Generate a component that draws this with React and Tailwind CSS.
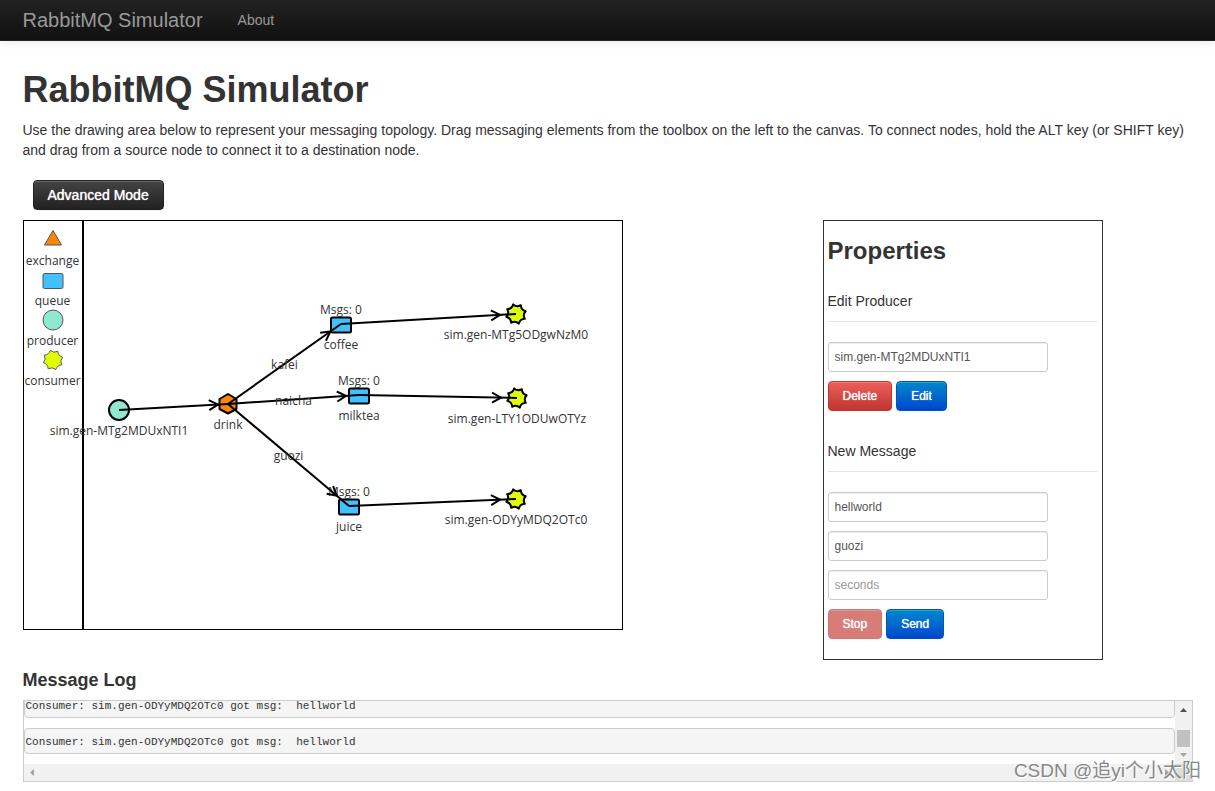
import { useState } from 'react'
import clsx from 'clsx'

// eight pointed teeth joined by inward curves
const point = (deg, r) => {
  const a = (deg * Math.PI) / 180
  return `${(r * Math.sin(a)).toFixed(2)} ${(-r * Math.cos(a)).toFixed(2)}`
}
const GEAR =
  `M${point(-16, 10)}` +
  Array.from({ length: 8 }, (_, i) => `Q${point(i * 45 + 6, 6.5)} ${point(i * 45 + 29, 10)}`).join('') +
  'Z'

function Shape({ type, stroke = 2, color = '#000' }) {
  const common = { stroke: color, strokeWidth: stroke, strokeLinejoin: 'round' }
  switch (type) {
    case 'exchange':
      return <polygon points="0,-9.500 8.500,5 -8.500,5" fill="#ff8408" {...common} />
    case 'hexagon':
      return <polygon points="0,-10 8.500,-5 8.500,5 0,9.500 -8.500,5 -8.500,-5" fill="#ff8408" {...common} />
    case 'queue':
      return <rect x="-10" y="-6.500" width="20" height="15" rx="1.500" fill="#44bfff" {...common} />
    case 'producer':
      return <circle r="10" fill="#8fe9d1" {...common} />
    default:
      return <path d={GEAR} fill="#e0ff04" {...common} />
  }
}

const TOOLS = ['exchange', 'queue', 'producer', 'consumer']

const NODES = {
  producer: { type: 'producer', x: 95, y: 189, label: 'sim.gen-MTg2MDUxNTI1' },
  drink: { type: 'hexagon', x: 204, y: 183, label: 'drink' },
  coffee: { type: 'queue', x: 317, y: 103, label: 'coffee', msgs: 0 },
  milktea: { type: 'queue', x: 335, y: 174, label: 'milktea', msgs: 0 },
  juice: { type: 'queue', x: 325, y: 285, label: 'juice', msgs: 0 },
  c1: { type: 'consumer', x: 492, y: 93, label: 'sim.gen-MTg5ODgwNzM0' },
  c2: { type: 'consumer', x: 493, y: 177, label: 'sim.gen-LTY1ODUwOTYz' },
  c3: { type: 'consumer', x: 492, y: 278, label: 'sim.gen-ODYyMDQ2OTc0' },
}

const EDGES = [
  { from: 'producer', to: 'drink', gap: 10 },
  { from: 'drink', to: 'coffee', gap: 13, label: 'kafei' },
  { from: 'drink', to: 'milktea', gap: 13, label: 'naicha' },
  { from: 'drink', to: 'juice', gap: 16, label: 'guozi' },
  { from: 'coffee', to: 'c1', gap: 16 },
  { from: 'milktea', to: 'c2', gap: 16 },
  { from: 'juice', to: 'c3', gap: 16 },
]

function Edge({ from, to, gap, label }) {
  const a = NODES[from]
  const b = NODES[to]
  const angle = (Math.atan2(b.y - a.y, b.x - a.x) * 180) / Math.PI
  return (
    <g fill="none" stroke="#000" strokeWidth="2">
      <path d={`M${a.x} ${a.y}L${b.x} ${b.y}`} />
      <path d={`M${-gap - 9} -5L${-gap} 0L${-gap - 9} 5`} transform={`translate(${b.x} ${b.y}) rotate(${angle})`} />
      {label && (
        <text x={(a.x + b.x) / 2} y={(a.y + b.y) / 2 + 5} textAnchor="middle" fill="#333" stroke="none">
          {label}
        </text>
      )}
    </g>
  )
}

function Topology() {
  return (
    <svg
      className="absolute inset-0 w-full h-full font-['Open_Sans',sans-serif] text-[12px] pointer-events-none"
      role="img"
      aria-label="Messaging topology"
    >
      {Object.entries(NODES).map(([id, n]) => (
        <g key={id} transform={`translate(${n.x} ${n.y})`}>
          <Shape type={n.type} />
          <text y="25" textAnchor="middle" fill="#333">{n.label}</text>
          {n.msgs !== undefined && (
            <text y="-10" textAnchor="middle" fill="#333">Msgs: {n.msgs}</text>
          )}
        </g>
      ))}
      {EDGES.map((e) => (
        <Edge key={`${e.from}-${e.to}`} {...e} />
      ))}
    </svg>
  )
}

function Toolbox() {
  return (
    <ul className="w-[60px] pt-2.5 border-r-2 border-black font-['Open_Sans',sans-serif] text-[12px] leading-5 text-[#333]">
      {TOOLS.map((t) => (
        <li key={t} className="flex flex-col items-center">
          <svg className="w-6 h-5 overflow-visible" viewBox="-12 -9 24 20" aria-hidden="true">
            <Shape type={t} stroke={1} color="#555" />
          </svg>
          {t}
        </li>
      ))}
    </ul>
  )
}

const TONES = {
  inverse: 'text-sm bg-linear-to-b from-[#444] to-[#222] border-[#222]',
  danger: 'text-xs bg-linear-to-b from-[#ee5f5b] to-[#bd362f] border-[#bd362f]',
  primary: 'text-xs bg-linear-to-b from-[#0088cc] to-[#0044cc] border-[#0055bb]',
  disabled: 'text-xs bg-[#d67d78] border-[#ca7a76]',
}

function Button({ tone, disabled, children }) {
  return (
    <button
      type="button"
      disabled={disabled}
      className={clsx(
        'h-[30px] px-3.5 rounded border text-white whitespace-nowrap [text-shadow:0_0_1px_#fff] shadow-[inset_0_1px_0_rgba(255,255,255,0.2),0_1px_2px_rgba(0,0,0,0.05)]',
        TONES[tone]
      )}
    >
      {children}
    </button>
  )
}

function Field({ label, value: initial = '', placeholder }) {
  const [value, setValue] = useState(initial)
  return (
    <input
      type="text"
      aria-label={label}
      value={value}
      placeholder={placeholder}
      onChange={(e) => setValue(e.target.value)}
      className="block w-[220px] h-[30px] px-1.5 mb-[9px] rounded-[3px] border border-[#ccc] bg-white text-xs text-[#555] placeholder:text-[#999] shadow-[inset_0_1px_1px_rgba(0,0,0,0.075)]"
    />
  )
}

function FormSection({ title, children }) {
  return (
    <fieldset className="mb-5">
      <legend className="block w-full mb-5 border-b border-[#e5e5e5] text-sm leading-10 text-[#333]">{title}</legend>
      {children}
    </fieldset>
  )
}

function Properties() {
  return (
    <section className="w-[280px] border border-[#333] px-1 pt-2.5">
      <h2 className="mb-2.5 text-2xl leading-10 font-bold">Properties</h2>
      <FormSection title="Edit Producer">
        <Field label="Producer name" value="sim.gen-MTg2MDUxNTI1" />
        <div className="flex gap-1">
          <Button tone="danger">Delete</Button>
          <Button tone="primary">Edit</Button>
        </div>
      </FormSection>
      <FormSection title="New Message">
        <Field label="Payload" value="hellworld" />
        <Field label="Routing key" value="guozi" />
        <Field label="Interval" placeholder="seconds" />
        <div className="flex gap-1">
          <Button tone="disabled" disabled>Stop</Button>
          <Button tone="primary">Send</Button>
        </div>
      </FormSection>
    </section>
  )
}

const LOG = [
  'Consumer: sim.gen-ODYyMDQ2OTc0 got msg:  hellworld',
  'Consumer: sim.gen-ODYyMDQ2OTc0 got msg:  hellworld',
]

function MessageLog() {
  return (
    <div className="grid grid-cols-[1fr_17px] border border-[#ccc]">
      <div className="h-[63px] overflow-hidden flex flex-col justify-end gap-2.5 pb-2.5">
        {LOG.map((line, i) => (
          <pre
            key={i}
            className="shrink-0 h-[26px] px-px pt-px rounded border border-[#ccc] bg-[#f5f5f5] font-['Liberation_Mono',monospace] text-[11px] leading-6 text-[#333]"
          >
            {line}
          </pre>
        ))}
      </div>
      <div className="flex flex-col items-center bg-[#f1f1f1]" aria-hidden="true">
        <svg className="w-[17px] h-[17px]" viewBox="0 0 17 17"><path d="M5 11h7L8.500 7z" fill="#505050" /></svg>
        <div className="mt-3 h-[17px] w-[13px] bg-[#c1c1c1]" />
        <svg className="w-[17px] h-[17px]" viewBox="0 0 17 17"><path d="M5 6h7L8.500 10z" fill="#a3a3a3" /></svg>
      </div>
      <div className="flex justify-between bg-[#f1f1f1]" aria-hidden="true">
        <svg className="w-[17px] h-[17px]" viewBox="0 0 17 17"><path d="M10 5v7L6 8.500z" fill="#a3a3a3" /></svg>
        <svg className="w-[17px] h-[17px]" viewBox="0 0 17 17"><path d="M7 5v7L11 8.500z" fill="#a3a3a3" /></svg>
      </div>
      <div className="bg-[#dcdcdc]" />
    </div>
  )
}

export default function App() {
  return (
    <div className="relative bg-white pb-[9px] font-['Liberation_Sans',Arial,sans-serif] text-sm leading-5 text-[#333]">
      <header className="border-b border-[#252525] bg-linear-to-b from-[#222] to-[#111] shadow-[0_1px_10px_rgba(0,0,0,0.1)]">
        <nav className="flex items-center h-10 max-w-[1170px] mx-auto gap-[35px] text-[#999]">
          <a href="#" className="text-xl leading-5">RabbitMQ Simulator</a>
          <a href="#about">About</a>
        </nav>
      </header>

      <main className="max-w-[1170px] mx-auto pt-[29px]">
        <h1 className="mb-2.5 text-4xl leading-10 font-bold">RabbitMQ Simulator</h1>
        <p className="mb-5">
          Use the drawing area below to represent your messaging topology. Drag messaging elements from the toolbox on
          the left to the canvas. To connect nodes, hold the ALT key (or SHIFT key) and drag from a source node to
          connect it to a destination node.
        </p>
        <div className="mb-2.5 pl-2.5">
          <Button tone="inverse">Advanced Mode</Button>
        </div>
        <div className="flex items-start gap-[200px]">
          <div className="relative flex w-[600px] h-[410px] border border-black">
            <Toolbox />
            <Topology />
          </div>
          <Properties />
        </div>
        <h3 className="text-lg leading-10 font-bold">Message Log</h3>
        <MessageLog />
      </main>

      <div className="absolute right-3.5 bottom-1.5 font-['Liberation_Sans','Noto_Sans_CJK_SC',sans-serif] text-[19px] leading-7 text-[#888] [text-shadow:1px_1px_0_#fff]">
        CSDN @追yi个小太阳
      </div>
    </div>
  )
}
